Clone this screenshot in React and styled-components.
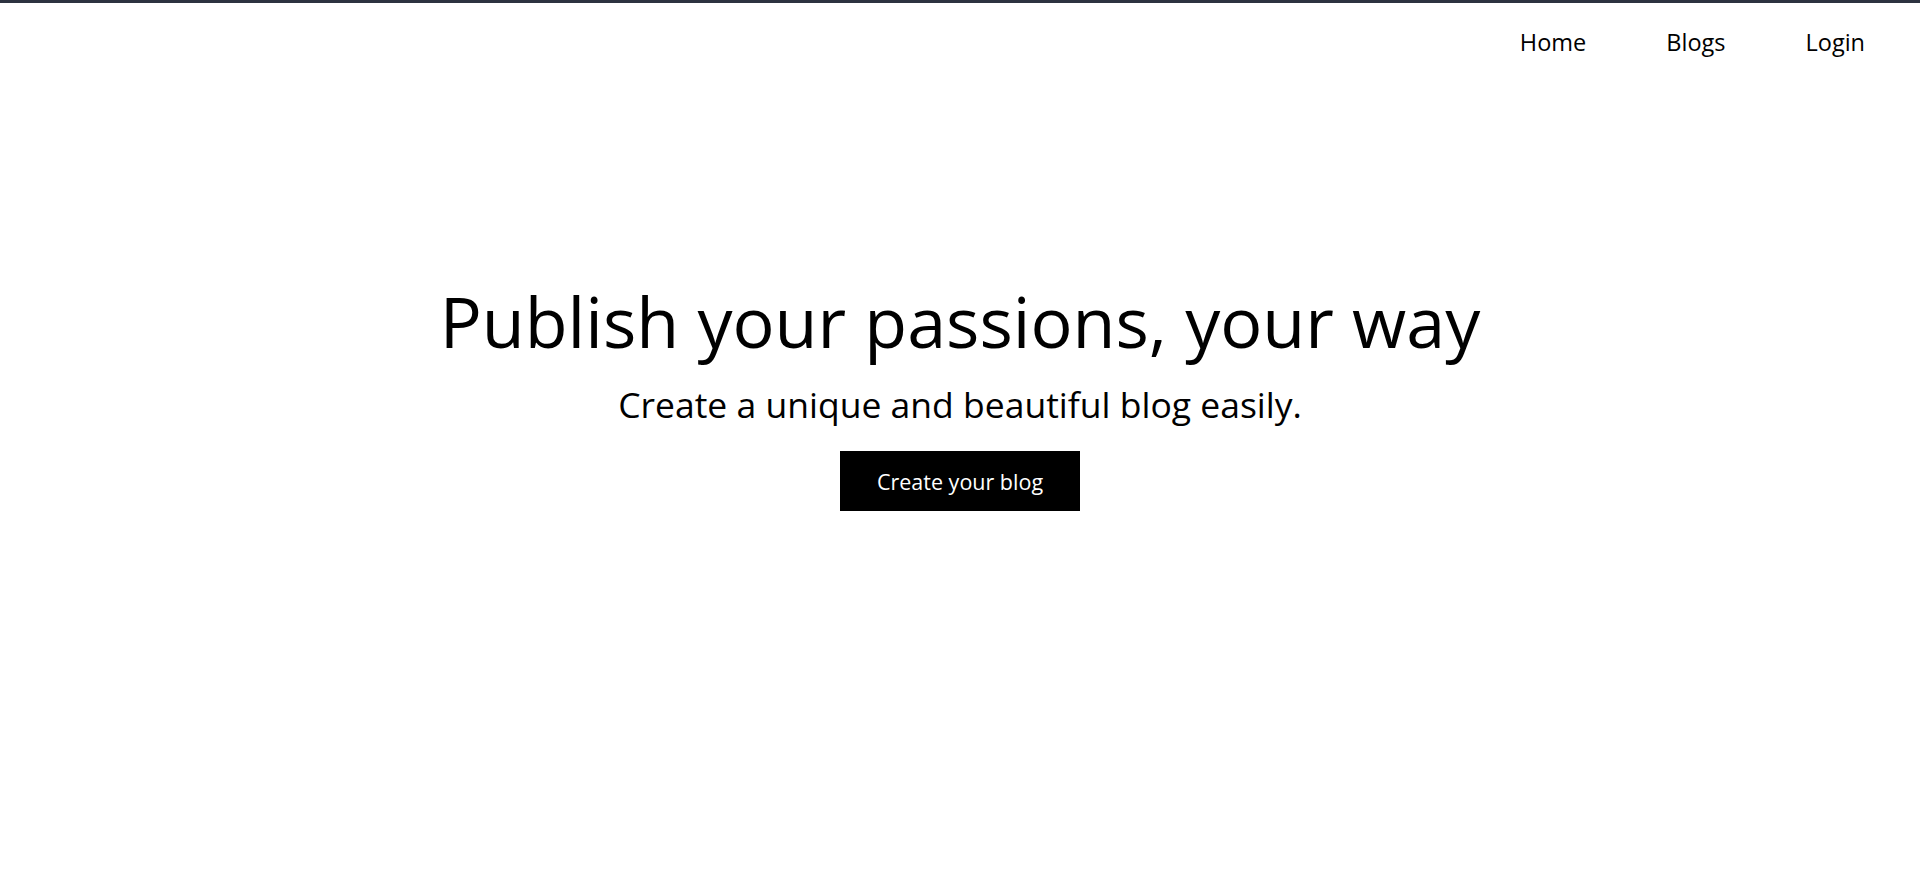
import React from 'react';
import styled, { createGlobalStyle } from 'styled-components';

const GlobalStyle = createGlobalStyle`
  html, body {
    margin: 0;
    padding: 0;
    background: #fff;
    font-family: 'Open Sans', 'Noto Sans', sans-serif;
    color: #000;
  }
`;

const Page = styled.div`
  min-height: 896px;
  border-top: 3px solid #2d3340;
  box-sizing: border-box;
`;

const Nav = styled.nav`
  display: flex;
  justify-content: flex-end;
  padding: 0 55px 0 0;
  height: 84px;
`;

const Ul = styled.ul`
  display: flex;
  gap: 80px;
  margin: 0;
  padding: 0;
  list-style: none;
  align-items: center;
  height: 84px;
  transform: translateY(-3px);
`;

const Li = styled.li`
  font-size: 23.5px;
  a {
    text-decoration: none;
    color: #000;
  }
`;

const Hero = styled.section`
  display: flex;
  flex-direction: column;
  align-items: center;
  padding-top: 192px;
`;

const Title = styled.h1`
  margin: 0;
  font-size: 70px;
  font-weight: 400;
  line-height: 84px;
`;

const Subtitle = styled.p`
  margin: 18px 0 0;
  font-size: 35.5px;
  line-height: 46px;
`;

const Button = styled.button`
  margin-top: 24px;
  width: 240px;
  height: 60px;
  background: #000;
  color: #fff;
  border: none;
  font-family: inherit;
  font-size: 21.5px;
  cursor: pointer;
`;

const App = () => {
  return (
    <Page>
      <GlobalStyle />
      <Nav>
        <Ul>
          <Li><a href='#'>Home</a></Li>
          <Li><a href='#'>Blogs</a></Li>
          <Li><a href='#'>Login</a></Li>
        </Ul>
      </Nav>
      <Hero>
        <Title>Publish your passions, your way</Title>
        <Subtitle>Create a unique and beautiful blog easily.</Subtitle>
        <Button>Create your blog</Button>
      </Hero>
    </Page>
  );
};

export default App;
